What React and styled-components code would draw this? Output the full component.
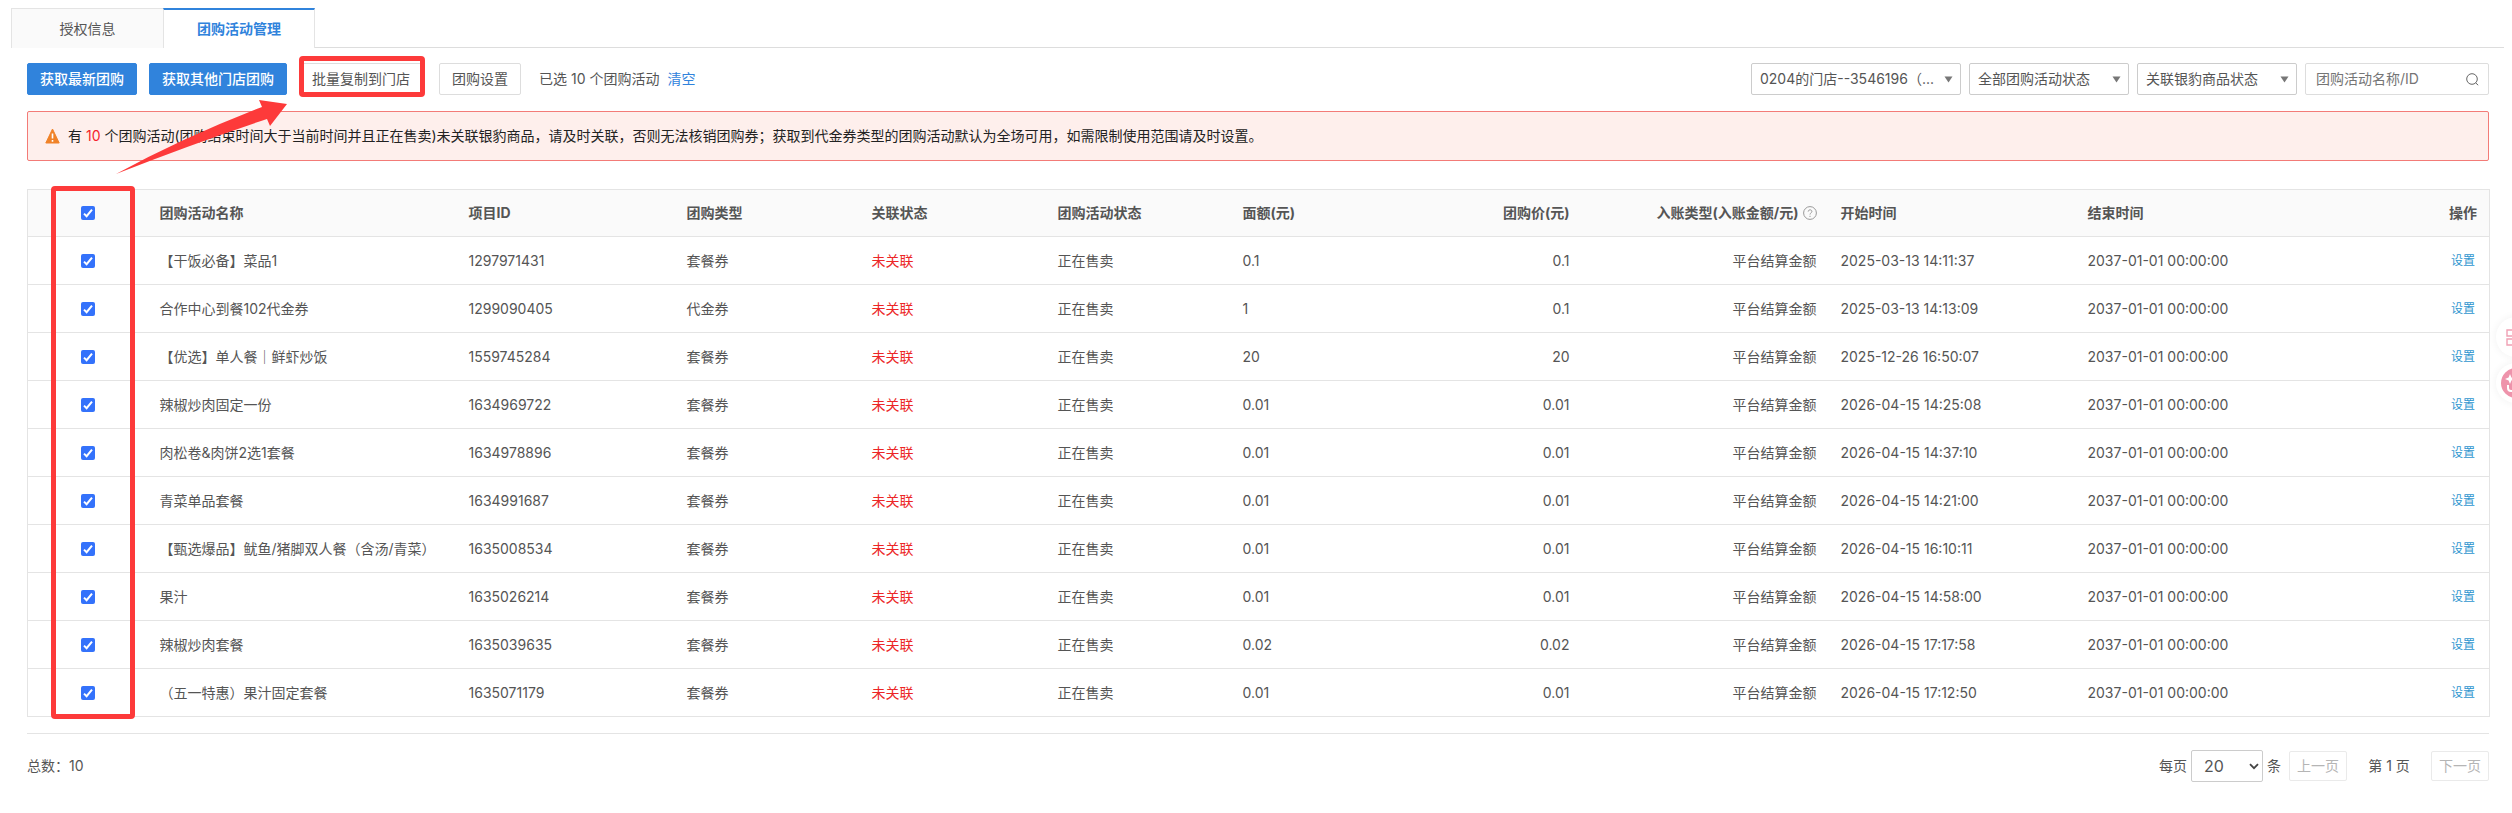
import React, { useState } from 'react'
import styled, { createGlobalStyle } from 'styled-components'

const GlobalStyle = createGlobalStyle`
  * {
    box-sizing: border-box;
  }
  body {
    margin: 0;
    background: #fff;
    color: #555;
    font-family: Inter, 'Noto Sans CJK SC', sans-serif;
    font-size: 14px;
    line-height: 20px;
    overflow-x: hidden;
  }
  button, input, select {
    font: inherit;
    color: inherit;
    margin: 0;
  }
  a {
    text-decoration: none;
  }
`

const Page = styled.div`
  position: relative;
  padding: 8px 8px 30px 11px;
`

const TabBar = styled.nav`
  display: flex;
  height: 40px;

  &:after {
    content: '';
    flex: 1;
    border-bottom: 1px solid #ddd;
  }
`

const Tab = styled.button`
  width: 152px;
  padding: 0;
  border: 1px solid #e4e4e4;
  border-width: ${p => (p.$active ? '2px 1px 0 1px' : '1px 0 0 1px')};
  border-top-color: ${p => (p.$active ? '#3083dc' : '#e4e4e4')};
  background: ${p => (p.$active ? '#fff' : '#fafafa')};
  color: ${p => (p.$active ? '#3083dc' : '#555')};
  font-weight: ${p => (p.$active ? 700 : 400)};
`

const Content = styled.main`
  padding: 15px 15px 0 16px;
`

const Toolbar = styled.div`
  display: flex;
  justify-content: space-between;
  align-items: center;
`

const Group = styled.div`
  display: flex;
  align-items: center;
  gap: ${p => p.$gap}px;
`

const Button = styled.button`
  height: 32px;
  padding: 0 12px;
  border: 1px solid ${p => (p.$primary ? '#3083dc' : '#ddd')};
  border-radius: 2px;
  background: ${p => (p.$primary ? '#3083dc' : '#fff')};
  color: ${p => (p.$primary ? '#fff' : '#555')};
  font-weight: ${p => (p.$primary ? 500 : 400)};
  white-space: nowrap;
`

const Selected = styled.span`
  margin-left: 2px;

  a {
    margin-left: 8px;
    color: #3083dc;
  }
`

const SelectBox = styled.label`
  position: relative;
  width: ${p => p.$width}px;

  select {
    width: 100%;
    height: 32px;
    padding: 0 24px 0 8px;
    border: 1px solid #ccc;
    border-radius: 2px;
    background: #fff;
    appearance: none;
    text-overflow: ellipsis;
  }
  svg {
    position: absolute;
    right: 8px;
    top: 13px;
    pointer-events: none;
  }
`

const Search = styled.label`
  display: flex;
  align-items: center;
  width: 184px;
  height: 32px;
  padding: 0 9px 0 10px;
  border: 1px solid #ddd;
  border-radius: 2px;

  input {
    flex: 1;
    min-width: 0;
    padding: 0;
    border: 0;
    outline: 0;
  }
  input::placeholder {
    color: #757575;
  }
`

const Alert = styled.div`
  display: flex;
  align-items: center;
  gap: 8px;
  height: 50px;
  margin: 16px 0 28px;
  padding: 0 17px;
  border: 1px solid #f37b77;
  border-radius: 2px;
  background: #feefec;
  color: #222;

  b {
    color: #f5222d;
    font-weight: 400;
  }
`

const Table = styled.table`
  width: 100%;
  table-layout: fixed;
  border-collapse: collapse;
  border: 1px solid #e4e4e4;

  tr {
    height: 48px;
    border-bottom: 1px solid #e4e4e4;
  }
  thead tr {
    height: 47px;
    background: #fafafa;
  }
`

const Cell = styled.td`
  padding: 0 12px;
  text-align: ${p => p.$align || 'left'};
  color: ${p => p.$color || 'inherit'};
  font-weight: ${p => (p.as === 'th' ? 700 : 400)};
  white-space: nowrap;

  a {
    padding: 0 2px;
    color: #2f96cf;
    font-size: 12px;
  }
  svg {
    margin-left: 4px;
    vertical-align: -2px;
  }
`

const Check = styled.input`
  display: block;
  appearance: none;
  width: 14px;
  height: 14px;
  margin: 0 0 0 41px;
  border: 1px solid #767676;
  border-radius: 2px;

  &:checked {
    border: 0;
    background: #3472fb url("data:image/svg+xml,%3Csvg xmlns='http://www.w3.org/2000/svg' viewBox='0 0 14 14'%3E%3Cpath d='M3 7.6l2.6 2.6L11 3.6' fill='none' stroke='white' stroke-width='2'/%3E%3C/svg%3E");
  }
`

const Footer = styled.footer`
  display: flex;
  justify-content: space-between;
  align-items: center;
  margin-top: 16px;
  padding-top: 16px;
  border-top: 1px solid #e4e4e4;
`

const PageSize = styled.label`
  position: relative;
  display: flex;
  align-items: center;
  gap: 4px;

  select {
    width: 72px;
    height: 32px;
    padding: 0 12px;
    border: 1px solid #ccc;
    border-radius: 2px;
    background: #fff;
    appearance: none;
    font-size: 16px;
  }
  svg {
    position: absolute;
    right: 22px;
    top: 13px;
    pointer-events: none;
  }
`

const PageButton = styled.button`
  width: 58px;
  height: 30px;
  padding: 0;
  border: 1px solid #eaeaea;
  border-radius: 2px;
  background: #fff;
  color: #b5b5b5;
`

const PageNumber = styled.span`
  min-width: 84px;
  text-align: center;
`

// red frames and arrow drawn over the page
const Frame = styled.div`
  position: absolute;
  left: ${p => p.$left}px;
  top: ${p => p.$top}px;
  width: ${p => p.$width}px;
  height: ${p => p.$height}px;
  border: 5px solid #fd3a3a;
  border-radius: 4px;
  pointer-events: none;
`

const Arrow = styled.svg`
  position: absolute;
  left: 116px;
  top: 99px;
  pointer-events: none;
`

const Float = styled.button`
  position: absolute;
  right: -24px;
  top: ${p => p.$top}px;
  width: 40px;
  height: 40px;
  padding: 0;
  border: 0;
  border-radius: 50%;
  background: #fff;
  box-shadow: 0 0 8px rgba(0, 0, 0, 0.06);

  svg {
    display: block;
  }
`

const FloatLayer = styled.aside`
  position: absolute;
  inset: 0;
  overflow: hidden;
  pointer-events: none;
`

const Caret = () => (
  <svg width="9" height="7" viewBox="0 0 9 7">
    <path d="M0.5 0.5h8L4.5 6.5z" fill="#777" />
  </svg>
)

const SearchIcon = () => (
  <svg width="13" height="13" viewBox="0 0 13 13" fill="none" stroke="#666">
    <circle cx="6" cy="6" r="5.3" />
    <path d="M9.6 9.8l2.6 2.4" />
  </svg>
)

const WarnIcon = () => (
  <svg width="15" height="16" viewBox="0 0 15 16">
    <path d="M7.5 1L14.2 15H0.8z" fill="#f08228" stroke="#f08228" strokeLinejoin="round" />
    <path d="M7.5 5.5v5M7.5 12v1.8" stroke="#fff" strokeWidth="1.6" />
  </svg>
)

const HelpIcon = () => (
  <svg width="14" height="14" viewBox="0 0 14 14" fill="none" stroke="#999">
    <circle cx="7" cy="7" r="6.4" />
    <path d="M5.2 5.6c0-2.4 3.7-2.3 3.7-.1 0 1.4-1.9 1.4-1.9 3M7 9.8v1.2" />
  </svg>
)

const Select = ({ width, label, children }) => (
  <SelectBox $width={width}>
    <select aria-label={label}>
      <option>{children}</option>
    </select>
    <Caret />
  </SelectBox>
)

const widths = [120, 309, 218, 185, 186, 185, 185, 166, 247, 247, 247, 167]

const rows = [
  ['【干饭必备】菜品1', '1297971431', '套餐券', '0.1', '2025-03-13 14:11:37'],
  ['合作中心到餐102代金券', '1299090405', '代金券', '1', '2025-03-13 14:13:09', '0.1'],
  ['【优选】单人餐｜鲜虾炒饭', '1559745284', '套餐券', '20', '2025-12-26 16:50:07'],
  ['辣椒炒肉固定一份', '1634969722', '套餐券', '0.01', '2026-04-15 14:25:08'],
  ['肉松卷&肉饼2选1套餐', '1634978896', '套餐券', '0.01', '2026-04-15 14:37:10'],
  ['青菜单品套餐', '1634991687', '套餐券', '0.01', '2026-04-15 14:21:00'],
  ['【甄选爆品】鱿鱼/猪脚双人餐（含汤/青菜）', '1635008534', '套餐券', '0.01', '2026-04-15 16:10:11'],
  ['果汁', '1635026214', '套餐券', '0.01', '2026-04-15 14:58:00'],
  ['辣椒炒肉套餐', '1635039635', '套餐券', '0.02', '2026-04-15 17:17:58'],
  ['（五一特惠）果汁固定套餐', '1635071179', '套餐券', '0.01', '2026-04-15 17:12:50']
]

const App = () => {
  const [checked, setChecked] = useState(rows.map(() => true))
  const all = checked.every(Boolean)

  return (
    <Page>
      <GlobalStyle />
      <TabBar>
        <Tab>授权信息</Tab>
        <Tab $active>团购活动管理</Tab>
      </TabBar>

      <Content>
        <Toolbar>
          <Group $gap={16}>
            <Group $gap={12}>
              <Button $primary>获取最新团购</Button>
              <Button $primary>获取其他门店团购</Button>
              <Button>批量复制到门店</Button>
            </Group>
            <Button>团购设置</Button>
            <Selected>
              已选 {checked.filter(Boolean).length} 个团购活动
              <a href="#clear" onClick={() => setChecked(rows.map(() => false))}>清空</a>
            </Selected>
          </Group>
          <Group $gap={8}>
            <Select width={210} label="门店">0204的门店--3546196（...</Select>
            <Select width={160} label="团购活动状态">全部团购活动状态</Select>
            <Select width={160} label="商品状态">关联银豹商品状态</Select>
            <Search>
              <input type="text" aria-label="团购活动名称/ID" placeholder="团购活动名称/ID" />
              <SearchIcon />
            </Search>
          </Group>
        </Toolbar>

        <Alert>
          <WarnIcon />
          <span>
            有 <b>10</b> 个团购活动(团购结束时间大于当前时间并且正在售卖)未关联银豹商品，请及时关联，否则无法核销团购券；获取到代金券类型的团购活动默认为全场可用，如需限制使用范围请及时设置。
          </span>
        </Alert>

        <Table>
          <colgroup>
            {widths.map((w, i) => <col key={i} width={w} />)}
          </colgroup>
          <thead>
            <tr>
              <Cell as="th">
                <Check
                  type="checkbox"
                  aria-label="全选"
                  checked={all}
                  onChange={() => setChecked(rows.map(() => !all))}
                />
              </Cell>
              <Cell as="th">团购活动名称</Cell>
              <Cell as="th">项目ID</Cell>
              <Cell as="th">团购类型</Cell>
              <Cell as="th">关联状态</Cell>
              <Cell as="th">团购活动状态</Cell>
              <Cell as="th">面额(元)</Cell>
              <Cell as="th" $align="right">团购价(元)</Cell>
              <Cell as="th" $align="right">入账类型(入账金额/元)<HelpIcon /></Cell>
              <Cell as="th">开始时间</Cell>
              <Cell as="th">结束时间</Cell>
              <Cell as="th" $align="right">操作</Cell>
            </tr>
          </thead>
          <tbody>
            {rows.map(([name, id, type, value, start, price], i) => (
              <tr key={id}>
                <Cell>
                  <Check
                    type="checkbox"
                    aria-label={name}
                    checked={checked[i]}
                    onChange={() => setChecked(checked.map((c, n) => (n === i ? !c : c)))}
                  />
                </Cell>
                <Cell>{name}</Cell>
                <Cell>{id}</Cell>
                <Cell>{type}</Cell>
                <Cell $color="#ec2626">未关联</Cell>
                <Cell>正在售卖</Cell>
                <Cell>{value}</Cell>
                <Cell $align="right">{price || value}</Cell>
                <Cell $align="right">平台结算金额</Cell>
                <Cell>{start}</Cell>
                <Cell>2037-01-01 00:00:00</Cell>
                <Cell $align="right"><a href="#set">设置</a></Cell>
              </tr>
            ))}
          </tbody>
        </Table>

        <Footer>
          <span>总数：{rows.length}</span>
          <Group $gap={8}>
            <PageSize>
              每页
              <select>
                <option>20</option>
              </select>
              <svg width="10" height="7" viewBox="0 0 10 7">
                <path d="M1 1.2l4 4 4-4" fill="none" stroke="#444" strokeWidth="1.8" />
              </svg>
              条
            </PageSize>
            <Group $gap={0}>
              <PageButton disabled>上一页</PageButton>
              <PageNumber>第 1 页</PageNumber>
              <PageButton disabled>下一页</PageButton>
            </Group>
          </Group>
        </Footer>
      </Content>

      <Frame $left={299} $top={56} $width={126} $height={41} />
      <Frame $left={51} $top={186} $width={84} $height={533} />
      <Arrow width="172" height="76" viewBox="0 0 172 76">
        <path d="M0 75Q68 38 146 8L143 1L171 5L154 27L151 20Q76 45 0 75Z" fill="#fd3a3a" />
      </Arrow>

      <FloatLayer>
        <Float $top={317} aria-label="应用">
          <svg width="40" height="40" viewBox="0 0 40 40" fill="none" stroke="#f0a0b4" strokeWidth="1.4">
            <path d="M11 13h7v6h-7zM11 22h7v6h-7zM22 13h7v6h-7zM22 22h7v6h-7z" />
          </svg>
        </Float>
        <Float $top={363} aria-label="助手">
          <svg width="40" height="40" viewBox="0 0 40 40">
            <circle cx="20" cy="20" r="15" fill="#ee93ab" />
            <path d="M14 11l1.400 3.600L19 16l-3.600 1.400L14 21l-1.400-3.600L9 16l3.600-1.400z" fill="#fff" />
            <path d="M12 22v3q0 3 3 3h10" fill="none" stroke="#fff" strokeWidth="2" />
          </svg>
        </Float>
      </FloatLayer>
    </Page>
  )
}

export default App
